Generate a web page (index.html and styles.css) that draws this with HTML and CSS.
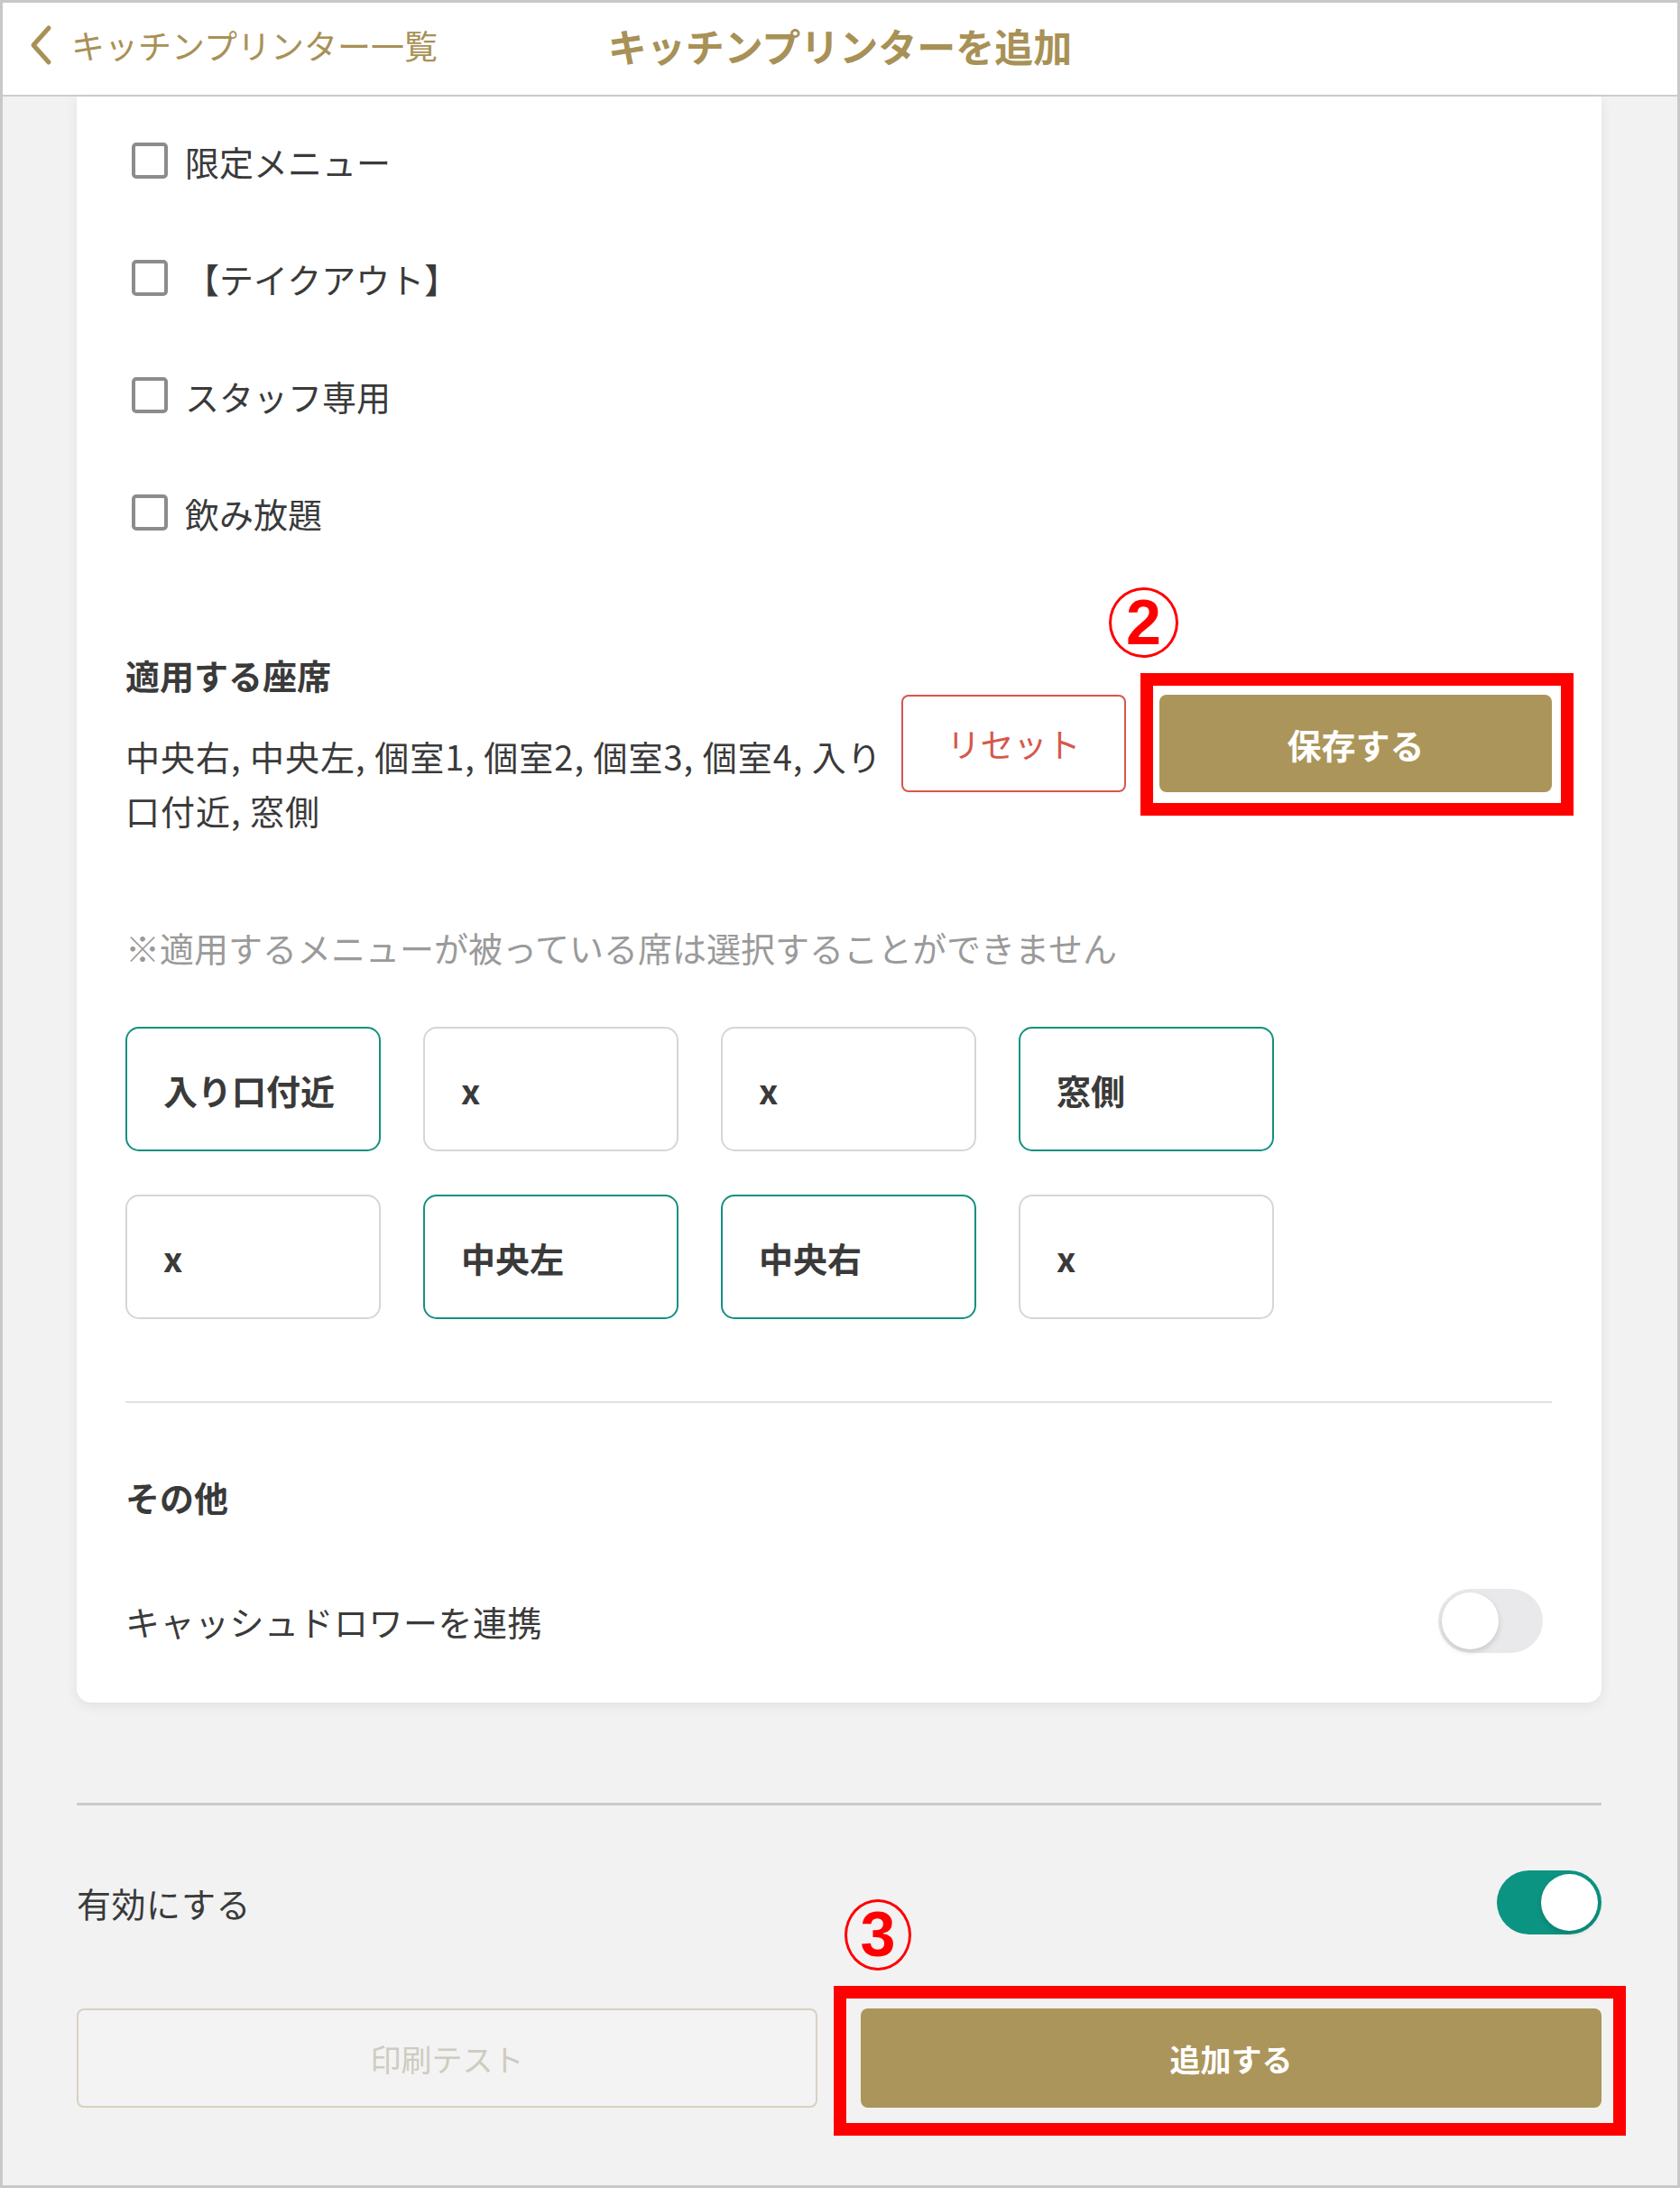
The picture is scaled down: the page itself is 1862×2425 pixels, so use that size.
FILE: index.html
```html
<!DOCTYPE html>
<html lang="ja">
<head>
<meta charset="utf-8">
<title>キッチンプリンターを追加</title>
<link rel="stylesheet" href="styles.css">
</head>
<body>
<div class="frame">
  <header class="topbar">
    <a class="back" href="#">
      <svg class="chev" width="30" height="46" viewBox="0 0 30 46"><path d="M23 4 L6 23 L23 42" fill="none" stroke="#a89156" stroke-width="5" stroke-linecap="round" stroke-linejoin="round"/></svg>
      <span>キッチンプリンター一覧</span>
    </a>
    <h1 class="title">キッチンプリンターを追加</h1>
    <div></div>
  </header>

  <main class="content">
    <section class="card">
      <ul class="checks">
        <li class="check"><span class="box"></span><span>限定メニュー</span></li>
        <li class="check"><span class="box"></span><span>【テイクアウト】</span></li>
        <li class="check"><span class="box"></span><span>スタッフ専用</span></li>
        <li class="check"><span class="box"></span><span>飲み放題</span></li>
      </ul>

      <div class="seat-row">
        <div class="seat-info">
          <h2 class="sec-title">適用する座席</h2>
          <p class="seat-list">中央右, 中央左, 個室1, 個室2, 個室3, 個室4, 入り口付近, 窓側</p>
        </div>
        <div class="seat-actions">
          <button class="btn-reset">リセット</button>
          <div class="annot-wrap">
            <span class="mark mark-2">2</span>
            <button class="btn-gold btn-save">保存する</button>
            <span class="annot annot-save"></span>
          </div>
        </div>
      </div>

      <p class="note">※適用するメニューが被っている席は選択することができません</p>

      <div class="tiles">
        <div class="tile on">入り口付近</div>
        <div class="tile">x</div>
        <div class="tile">x</div>
        <div class="tile on">窓側</div>
        <div class="tile">x</div>
        <div class="tile on">中央左</div>
        <div class="tile on">中央右</div>
        <div class="tile">x</div>
      </div>

      <hr class="divider">

      <h2 class="sec-title other">その他</h2>
      <div class="switch-row">
        <span>キャッシュドロワーを連携</span>
        <span class="toggle off"><span class="knob"></span></span>
      </div>
    </section>

    <hr class="divider-outer">

    <div class="switch-row enable">
      <span>有効にする</span>
      <span class="toggle on"><span class="knob"></span></span>
    </div>

    <div class="bottom-btns">
      <button class="btn-test">印刷テスト</button>
      <div class="annot-wrap">
        <span class="mark mark-3">3</span>
        <button class="btn-gold btn-add">追加する</button>
        <span class="annot annot-add"></span>
      </div>
    </div>
  </main>
</div>
</body>
</html>
```

FILE: styles.css
```css
* { box-sizing: border-box; }
html, body { margin: 0; padding: 0; }
body {
  font-family: "Noto Sans CJK JP", "Noto Sans", sans-serif;
  color: #3a3a3a;
  background: #ffffff;
}
.frame {
  width: 1862px;
  height: 2425px;
  border: 3px solid #c8c8c8;
  background: #f2f2f2;
  overflow: hidden;
}
.topbar {
  height: 104px;
  background: #ffffff;
  border-bottom: 2px solid #cdcdcd;
  display: grid;
  grid-template-columns: 1fr auto 1fr;
  align-items: center;
  padding-bottom: 8px;
}
.back {
  display: flex;
  align-items: center;
  gap: 18px;
  padding-left: 28px;
  color: #a89156;
  text-decoration: none;
  font-size: 37px;
  line-height: 50px;
}
.chev { display: block; }
.title {
  margin: 0;
  font-size: 43px;
  font-weight: 700;
  color: #a89156;
  line-height: 56px;
}
.content {
  padding: 0 84px 0 82px;
}
.card {
  background: #ffffff;
  border-radius: 0 0 16px 16px;
  box-shadow: 0 4px 14px rgba(0,0,0,0.07);
  padding: 6px 55px 55px 54px;
}
.checks {
  list-style: none;
  margin: 0;
  padding: 0;
}
.check {
  height: 130px;
  display: flex;
  align-items: center;
  font-size: 38px;
  color: #3a3a3a;
}
.box {
  width: 40px;
  height: 40px;
  border: 4px solid #8c8c8c;
  border-radius: 5px;
  margin-left: 7px;
  margin-right: 19px;
  flex: none;
}
.seat-row {
  margin-top: 87px;
  display: flex;
  align-items: center;
  gap: 10px;
}
.seat-info { flex: 1; min-width: 0; }
.sec-title {
  margin: 0;
  font-size: 38px;
  font-weight: 700;
  line-height: 56px;
  color: #3a3a3a;
}
.seat-list {
  margin: 32px 0 0;
  font-size: 38px;
  letter-spacing: 1px;
  line-height: 60px;
  color: #3a3a3a;
}
.seat-actions {
  display: flex;
  gap: 37px;
  flex: none;
}
.btn-reset {
  width: 249px;
  height: 108px;
  border: 2px solid #d5584b;
  border-radius: 8px;
  background: #ffffff;
  color: #d5584b;
  font-family: inherit;
  font-size: 37px;
}
.btn-gold {
  border: none;
  border-radius: 8px;
  background: #ac955a;
  color: #ffffff;
  font-family: inherit;
  font-weight: 700;
}
.btn-save {
  width: 435px;
  height: 108px;
  font-size: 38px;
  display: block;
}
.annot-wrap { position: relative; }
.annot {
  position: absolute;
  border: 14px solid #ff0000;
  pointer-events: none;
}
.annot-save { left: -21px; top: -24px; right: -24px; bottom: -26px; }
.annot-add { left: -30px; top: -25px; right: -27px; bottom: -31px; }
.mark {
  position: absolute;
  width: 77px;
  height: 78px;
  border: 3px solid #ff0000;
  border-radius: 50%;
  color: #ff0000;
  font-family: "Liberation Sans", Arial, sans-serif;
  font-weight: 700;
  font-size: 70px;
  line-height: 72px;
  text-align: center;
}
.mark-2 { left: -56px; top: -119px; }
.mark-3 { left: -18px; top: -121px; width: 74px; height: 79px; }
.note {
  margin: 92px 0 0;
  font-size: 38px;
  line-height: 60px;
  color: #9a9a9a;
}
.tiles {
  margin-top: 58px;
  display: grid;
  grid-template-columns: repeat(4, 283px);
  grid-auto-rows: 138px;
  column-gap: 47px;
  row-gap: 48px;
}
.tile {
  border: 2px solid #d6d6d6;
  border-radius: 15px;
  display: flex;
  align-items: center;
  padding-left: 40px;
  font-size: 38px;
  font-weight: 700;
  color: #3a3a3a;
}
.tile.on { border-color: #13907f; }
.divider {
  margin: 91px 0 0;
  border: none;
  height: 2px;
  background: #e2e2e2;
}
.other { margin-top: 76px; }
.switch-row {
  margin-top: 74px;
  display: flex;
  align-items: center;
  justify-content: space-between;
  font-size: 38px;
  letter-spacing: 0.5px;
  color: #3a3a3a;
  padding-right: 10px;
}
.toggle {
  width: 116px;
  height: 71px;
  border-radius: 36px;
  position: relative;
  flex: none;
}
.toggle.off { background: #e9e9eb; }
.toggle.on { background: #0c9482; }
.knob {
  position: absolute;
  top: 4px;
  width: 63px;
  height: 63px;
  border-radius: 50%;
  background: #ffffff;
  box-shadow: 0 3px 6px rgba(0,0,0,0.15);
}
.toggle.off .knob { left: 4px; }
.toggle.on .knob { right: 4px; }
.divider-outer {
  margin: 111px 0 0;
  border: none;
  height: 3px;
  background: #cbcbcb;
}
.switch-row.enable {
  margin-top: 72px;
  padding-right: 0;
}
.bottom-btns {
  margin-top: 82px;
  display: grid;
  grid-template-columns: 1fr 1fr;
  gap: 48px;
}
.btn-test {
  height: 110px;
  border: 2px solid #d8d1c1;
  border-radius: 8px;
  background: #f3f3f3;
  color: #cfcbbf;
  font-family: inherit;
  font-size: 34px;
}
.btn-add {
  width: 100%;
  height: 110px;
  font-size: 34px;
  display: block;
}
```
